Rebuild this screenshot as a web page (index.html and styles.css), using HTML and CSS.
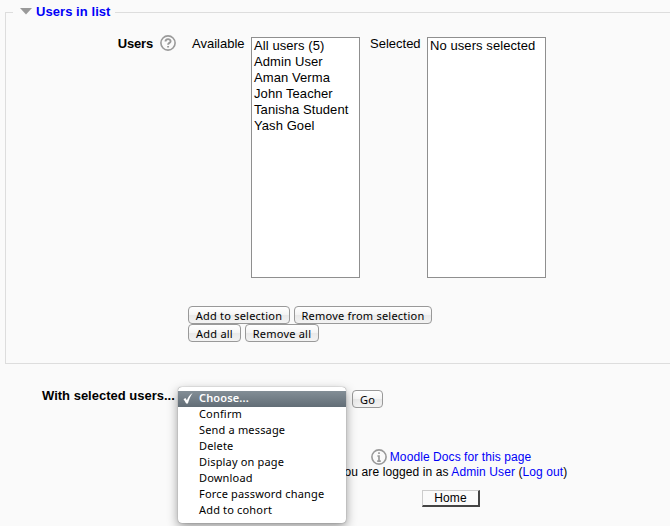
FILE: index.html
```
<!DOCTYPE html>
<html lang="en">
<head>
<meta charset="utf-8">
<title>Bulk user actions</title>
<link rel="stylesheet" href="styles.css">
</head>
<body>
<main class="page">
  <section class="group">
    <h2 class="legend">
      <svg class="arrow" width="12" height="7" viewBox="0 0 12 7"><path d="M0 0h12L6 6.6z" fill="#999"/></svg>
      <a>Users in list</a>
    </h2>
    <div class="field">
      <div class="field-label"><b>Users</b>
        <svg class="help" width="16" height="16" viewBox="0 0 16 16" fill="none" stroke="#999"><circle cx="8" cy="8" r="7.1" stroke-width="1.6"/><path d="M5.5 6.6C5.5 3.3 10.6 3.5 10.6 6.2C10.6 7.9 8.1 7.9 8.1 9.8M8.1 10.9V12.6" stroke-width="1.9"/></svg>
      </div>
      <span class="caption available">Available</span>
      <ul class="list list-available">
        <li>All users (5)</li><li>Admin User</li><li>Aman Verma</li><li>John Teacher</li><li>Tanisha Student</li><li>Yash Goel</li>
      </ul>
      <span class="caption selected">Selected</span>
      <ul class="list list-selected"><li>No users selected</li></ul>
    </div>
    <div class="actions">
      <div class="action-row"><button class="btn add-selection">Add to selection</button><button class="btn remove-selection">Remove from selection</button></div>
      <div class="action-row"><button class="btn add-all">Add all</button><button class="btn remove-all">Remove all</button></div>
    </div>
  </section>
  <section class="bulk">
    <b class="bulk-label">With selected users...</b>
    <div class="select">
      <ul class="menu">
        <li class="current"><svg class="check" width="10" height="11" viewBox="0 0 10 11"><path d="M.5 6.2L2.4 5L3.9 7.3C5 4.4 6.5 2 9.6 0C7.3 3.5 6 6.5 4.9 10.5H3.1C2.4 8.8 1.5 7.3 .5 6.2z" fill="#fff"/></svg>Choose...</li>
        <li>Confirm</li><li>Send a message</li><li>Delete</li><li>Display on page</li><li>Download</li><li>Force password change</li><li>Add to cohort</li>
      </ul>
    </div>
    <button class="btn go">Go</button>
  </section>
  <footer class="footer">
    <div class="docs">
      <svg width="16" height="16" viewBox="0 0 16 16" fill="none" stroke="#999"><circle cx="8" cy="8" r="7.1" stroke-width="1.6"/><path d="M8 3.3V5.1M6.4 7H8V12M6.2 12.2H9.8" stroke-width="1.7"/></svg>
      <a>Moodle Docs for this page</a>
    </div>
    <div class="login">You are logged in as <a>Admin User</a> (<a>Log out</a>)</div>
    <a class="home">Home</a>
  </footer>
</main>
</body>
</html>
```
FILE: styles.css
```
* { box-sizing: border-box; }
body { margin: 0; background: #fafafa; color: #000; font: 13px/16px "Liberation Sans", Arial, sans-serif; overflow: hidden; }
ul { list-style: none; margin: 0; padding: 0; }
a { color: #0000f8; text-decoration: none; }
.page { width: 670px; height: 526px; padding-top: 12px; overflow: hidden; }
.group { height: 352px; margin-left: 5px; border: 1px solid #ddd; border-right: 0; }
.legend { display: flex; align-items: center; width: 102px; height: 16px; margin: -9px 0 0 7px; padding-left: 7px; gap: 4px; background: #fafafa; font-size: 13px; line-height: 16px; letter-spacing: .06px; white-space: nowrap; }
.arrow { flex: none; margin-top: -1px; }
.field { display: flex; align-items: flex-start; height: 241px; margin-top: 17px; }
.field-label { display: flex; justify-content: flex-end; gap: 7px; width: 170px; line-height: 14px; letter-spacing: -.2px; }
.help { margin-top: -2px; }
.caption { line-height: 13px; white-space: nowrap; }
.available { width: 59px; margin-left: 16px; margin-right: -16px; }
.selected { width: 57px; margin-left: 10px; }
.list { flex: none; height: 241px; padding: 0 2px; border: 1px solid #8f8f8f; background: #fff; letter-spacing: .08px; white-space: nowrap; }
.list-available { width: 109px; margin-left: 16px; }
.list-selected { width: 119px; }
.actions { margin: 28px 0 0 182px; }
.action-row { display: flex; gap: 4px; height: 18px; }
.btn { height: 18px; padding: 1px 0 0; border: 1px solid #999; border-radius: 4px; background: linear-gradient(#fff, #f4f4f4 50%, #e9e9e9 51%, #f3f3f3); color: #000; font: 11px/15px "Noto Sans", "Open Sans", sans-serif; letter-spacing: .22px; white-space: nowrap; }
.add-selection { width: 102px; }
.remove-selection { width: 138px; }
.add-all { width: 53px; }
.remove-all { width: 74px; }
.bulk { display: flex; height: 84px; padding: 24px 0 0 42px; }
.bulk-label { width: 136px; white-space: nowrap; }
.select { position: relative; width: 169px; height: 18px; margin-right: 5px; }
.menu { position: absolute; z-index: 2; left: 0; top: -1px; width: 168px; height: 136px; padding: 4px 0; border-radius: 4px; background: #fff; box-shadow: 0 0 1px rgba(0,0,0,.6), 0 4px 11px rgba(0,0,0,.4); font: 11px/14px "Noto Sans", "Open Sans", sans-serif; letter-spacing: .17px; white-space: nowrap; }
.menu li { height: 16px; padding-left: 21px; }
.menu .current { display: flex; align-items: flex-start; padding-left: 5px; background: linear-gradient(#838e96, #626d76); color: #fff; font-weight: 600; letter-spacing: .15px; }
.check { margin: 2px 6px 0 0; }
.go { width: 31px; height: 18px; margin-top: 2px; padding-top: 0; }
.footer { display: flex; flex-direction: column; align-items: center; width: 232px; margin-left: 335px; font-size: 12px; line-height: 14px; letter-spacing: .08px; white-space: nowrap; }
.docs { display: flex; align-items: center; gap: 3px; height: 16px; margin-top: 1px; }
.login { margin-left: 3px; letter-spacing: .1px; }
.home { width: 58px; height: 17px; margin-top: 11px; border: 1px solid #ccc; border-right: 2px solid #444; border-bottom: 2px solid #444; color: #000; text-align: center; line-height: 14px; }
```
